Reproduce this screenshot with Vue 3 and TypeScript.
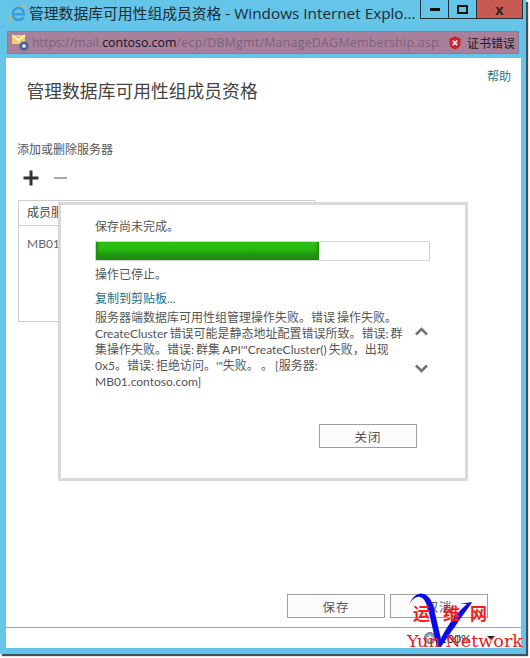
<script setup lang="ts">
const lines: string[] = [
  '服务器端数据库可用性组管理操作失败。错误 操作失败。',
  'CreateCluster 错误可能是静态地址配置错误所致。错误: 群',
  '集操作失败。错误: 群集 API\'"CreateCluster() 失败，出现',
  '0x5。错误: 拒绝访问。\'"失败。 。 [服务器:',
  'MB01.contoso.com]',
]
const progress = 67
</script>

<template>
  <div class="page">
    <div class="window">
      <header class="titlebar">
        <svg class="ie" width="18" height="18" viewBox="0 0 18 18">
          <path d="M1.500 17C-.5 13 6 4 13 1.800c3.500-1 4.500 1 3.500 4.200" fill="none" stroke="#d9b45c" stroke-width="1.100"/>
          <path d="M4 10.300h10.800c.3-3.500-2-6.300-5.400-6.300C6.200 4 3.800 6.800 3.800 10c0 3.500 2.400 6 5.800 6 2.400 0 4.100-1 5-2.800" fill="none" stroke="#3a9bdc" stroke-width="2.400"/>
        </svg>
        <span class="title">管理数据库可用性组成员资格<span class="latin"> - Windows Internet Explo...</span></span>
        <div class="winbtns">
          <span class="wb"><i class="min"></i></span>
          <span class="wb"><i class="max"></i></span>
          <span class="wb close"><b>x</b></span>
        </div>
      </header>

      <div class="address">
        <svg class="addr-icon" width="17" height="17" viewBox="0 0 17 17">
          <path d="M0 1h13v9H0z" fill="#f2cf6a"/>
          <path d="M0 1l6.500 5.500L13 1" fill="none" stroke="#fff" stroke-width="1.200"/>
          <circle cx="12" cy="12" r="4.500" fill="#44608f"/>
          <circle cx="12" cy="12" r="2" fill="#cfd8ea"/>
        </svg>
        <span class="url">https://mail.<em>contoso.com</em><span class="tail">/ecp/DBMgmt/ManageDAGMembership.aspx</span></span>
        <svg class="shield" width="12" height="14" viewBox="0 0 12 14">
          <path d="M6 .5l5.500 2v5c0 3-2.500 5-5.500 6-3-1-5.500-3-5.500-6v-5z" fill="#c8232c"/>
          <path d="M3.800 4.500l4.400 4.600M8.200 4.500L3.800 9.100" stroke="#fff" stroke-width="1.600"/>
        </svg>
        <span class="cert">证书错误</span>
      </div>

      <main class="content">
        <a class="help">帮助</a>
        <h1 class="heading">管理数据库可用性组成员资格</h1>
        <div class="sub">添加或删除服务器</div>
        <div class="tools">
          <svg width="16" height="16" viewBox="0 0 16 16"><path d="M8 .5v15M.5 8h15" stroke="#333" stroke-width="3"/></svg>
          <svg width="13" height="16" viewBox="0 0 13 16"><path d="M0 8h13" stroke="#aaa" stroke-width="2"/></svg>
        </div>
        <div class="table">
          <div class="thead">成员服务器</div>
          <div class="tbody">MB01</div>
        </div>

        <div class="spacer"></div>
        <div class="actions">
          <button class="btn">保存</button>
          <button class="btn">取消</button>
        </div>

        <section class="modal">
          <p class="m-line first">保存尚未完成。</p>
          <div class="bar"><div class="fill" :style="{ width: progress + '%' }"></div></div>
          <p class="m-line stopped">操作已停止。</p>
          <a class="copy">复制到剪贴板...</a>
          <div class="detail">
            <div class="msg">
              <div v-for="l in lines" :key="l">{{ l }}</div>
            </div>
            <div class="arrows">
              <svg width="13" height="9" viewBox="0 0 13 9"><path d="M1 7.500l5.500-5.500L12 7.500" fill="none" stroke="#6f7478" stroke-width="2.600"/></svg>
              <svg width="13" height="9" viewBox="0 0 13 9"><path d="M1 1.500L6.500 7 12 1.500" fill="none" stroke="#6f7478" stroke-width="2.600"/></svg>
            </div>
          </div>
          <div class="m-foot"><button class="btn">关闭</button></div>
        </section>
      </main>

      <footer class="status">
        <svg class="zoom" width="14" height="14" viewBox="0 0 14 14">
          <circle cx="7" cy="7" r="5.500" fill="#8fa3bd" stroke="#5a6e88"/>
          <path d="M7 4v6M4 7h6" stroke="#fff" stroke-width="1.500"/>
        </svg>
        <span class="pct">100%</span>
        <i class="caret"></i>
      </footer>
    </div>
    <div class="mark">
      <svg width="124" height="68" viewBox="0 0 124 68">
        <path d="M4 16C8 6 14 3 19 5c6 2 9 9 11 19l6 26c6-14 16-26 26-35l-7 0 12-2-1 2C55 30 44 46 36 58h-4L24 24C22 14 19 9 15 8 10 7 7 11 4 16z" fill="#0a0ae6"/>
        <text x="8" y="31" class="cn">运</text>
        <text x="38" y="31" class="cn">维</text>
        <text x="65" y="31" class="cn">网</text>
        <text x="2" y="58" class="en" textLength="116" lengthAdjust="spacingAndGlyphs">Yun Network</text>
      </svg>
    </div>
  </div>
</template>

<style>
html, body { margin: 0; background: #fff; }
</style>

<style scoped>
.page {
  position: relative;
  width: 530px;
  height: 658px;
  overflow: hidden;
  background: #fff;
  font-family: Lato, "Noto Sans CJK SC", sans-serif;
  color: #555;
  font-size: 12px;
}
.window {
  width: 526px;
  height: 654px;
  box-sizing: border-box;
  background: #65c5e9;
  padding: 0 6px 6px;
  display: flex;
  flex-direction: column;
  box-shadow: 2px 2px 1px #40505c;
}
.titlebar {
  height: 30px;
  flex: none;
  display: flex;
  align-items: flex-start;
}
.ie { margin: 4px 0 0 3px; flex: none; }
.title {
  margin: 3px 0 0 2px;
  font-family: "Open Sans", "Noto Sans CJK SC", sans-serif;
  font-size: 14.800px;
  line-height: 20px;
  color: #1c2b33;
  white-space: nowrap;
}
.latin { font-size: 15.300px; }
.winbtns {
  margin-left: auto;
  display: flex;
  height: 19px;
  box-sizing: border-box;
  border: 1px solid #24323a;
  border-top: 0;
  margin-right: -3px;
  flex: none;
}
.wb {
  width: 27px;
  display: flex;
  align-items: center;
  justify-content: center;
  border-right: 1px solid #24323a;
}
.wb .min { width: 10px; height: 3px; background: #111; margin-top: 1px; }
.wb .max { width: 7px; height: 5px; border: 2px solid #111; }
.wb.close {
  width: 45px;
  border-right: 0;
  background: #c85a54;
  color: #222;
  font: bold 15px/1 "Liberation Sans", sans-serif;
}
.address {
  height: 23px;
  flex: none;
  box-sizing: border-box;
  margin: 1px 1px 4px 1px;
  background: #a9809c;
  border: 1px solid #7f7f9f;
  display: flex;
  align-items: center;
  padding-left: 4px;
  overflow: hidden;
}
.addr-icon { flex: none; }
.url {
  margin-left: 3px;
  width: 408px;
  flex: none;
  font-family: "Open Sans", sans-serif;
  font-size: 12.400px;
  color: #7d6179;
  white-space: nowrap;
  overflow: hidden;
}
.url em { font-style: normal; color: #14141f; }
.tail { letter-spacing: .24px; }
.shield { margin-left: 9px; flex: none; }
.cert {
  margin-left: 6px;
  color: #1a1a1a;
  font-size: 12px;
  white-space: nowrap;
}
.content {
  position: relative;
  flex: 1;
  background: #fff;
  display: flex;
  flex-direction: column;
  margin-right: -1px;
  padding: 0 0 0 12px;
  min-height: 0;
}
.help {
  position: absolute;
  top: 11px;
  right: 10px;
  color: #1b7a8a;
  font-size: 12px;
  line-height: 16px;
}
.heading {
  margin: 22px 0 0 8.500px;
  font-size: 17.800px;
  line-height: 22px;
  font-weight: 400;
  color: #444;
}
.sub {
  margin: 39px 0 0 -1px;
  line-height: 18px;
  color: #555;
}
.tools {
  margin: 11px 0 0 5px;
  display: flex;
  align-items: center;
  gap: 15px;
  height: 16px;
}
.table {
  margin-top: 14px;
  width: 297px;
  height: 122px;
  box-sizing: border-box;
  border: 1px solid #ccc;
}
.thead {
  height: 25px;
  line-height: 24px;
  padding-left: 8px;
  border-bottom: 1px solid #ccc;
  box-sizing: border-box;
  color: #444;
}
.tbody { padding: 10px 0 0 8px; line-height: 16px; color: #666; }
.spacer { flex: 1; }
.actions {
  display: flex;
  gap: 5px;
  margin: 0 0 9px 269px;
}
.btn {
  width: 98px;
  height: 24px;
  padding: 0;
  border: 1px solid #a0a0a0;
  background: #fdfbfd;
  color: #555;
  font-family: inherit;
  font-size: 12.500px;
  letter-spacing: 1px;
}
.modal {
  position: absolute;
  left: 52px;
  top: 144px;
  width: 410px;
  height: 279px;
  box-sizing: border-box;
  border: 3px solid #d9d9d9;
  background: #fff;
  padding: 14px 0 0 34px;
}
.m-line { margin: 0; line-height: 16px; color: #555; }
.bar {
  margin-top: 6px;
  width: 335px;
  height: 20px;
  box-sizing: border-box;
  border: 1px solid #d4d4d4;
  background: #fff;
}
.fill {
  height: 100%;
  background: linear-gradient(#2fc315 0%, #27b50f 45%, #1f9410 70%, #228a10 100%);
  box-shadow: inset 3px 0 2px -1px #1d8f10, inset -3px 0 2px -1px #1d8f10;
}
.stopped { margin-top: 6px; }
.copy {
  display: block;
  margin-top: 8px;
  line-height: 16px;
  color: #1b6e80;
}
.detail {
  display: flex;
  margin-top: 3px;
}
.msg {
  width: 320px;
  line-height: 16px;
  white-space: nowrap;
  word-spacing: -1px;
  color: #555;
}
.arrows {
  margin: 9px 0 0 0;
  padding-top: 8px;
  display: flex;
  flex-direction: column;
  gap: 28px;
}
.m-foot {
  margin: 34px 0 0 224px;
}
.status {
  height: 21px;
  flex: none;
  margin: 0 -1px 0 0;
  background: #fff;
  border-top: 1px solid #a0a0a0;
  box-sizing: border-box;
  display: flex;
  align-items: center;
  padding-left: 417px;
  color: #111;
}
.zoom { flex: none; }
.pct { margin-left: 3px; font-size: 12px; }
.caret {
  margin-left: 16px;
  width: 0;
  height: 0;
  border: 4px solid transparent;
  border-top: 4px solid #222;
  border-bottom: 0;
}
.mark {
  position: absolute;
  left: 405px;
  top: 589px;
  width: 124px;
  height: 68px;
}
.cn {
  font-family: "Noto Sans CJK SC", sans-serif;
  font-weight: 700;
  font-size: 17px;
  fill: #ee2020;
}
.en {
  font-family: "DejaVu Serif", serif;
  font-size: 16px;
  fill: #e52020;
}
</style>
